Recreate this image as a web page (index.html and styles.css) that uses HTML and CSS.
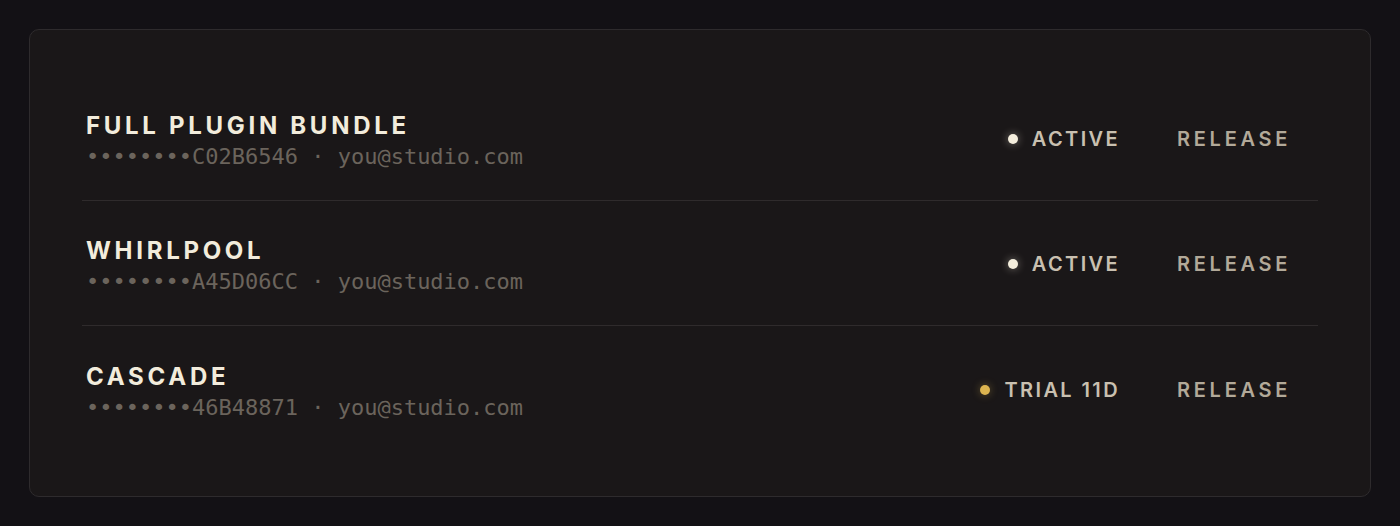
FILE: index.html
```html
<!DOCTYPE html>
<html>
<head>
<meta charset="utf-8">
<link rel="stylesheet" href="styles.css">
</head>
<body>
<div class="card">
  <div class="row">
    <div class="info">
      <div class="name">FULL PLUGIN BUNDLE</div>
      <div class="key">••••••••C02B6546 · you@studio.com</div>
    </div>
    <div class="actions">
      <span class="status"><span class="dot dot-active"></span>ACTIVE</span>
      <button class="release">RELEASE</button>
    </div>
  </div>
  <div class="row">
    <div class="info">
      <div class="name">WHIRLPOOL</div>
      <div class="key">••••••••A45D06CC · you@studio.com</div>
    </div>
    <div class="actions">
      <span class="status"><span class="dot dot-active"></span>ACTIVE</span>
      <button class="release">RELEASE</button>
    </div>
  </div>
  <div class="row">
    <div class="info">
      <div class="name">CASCADE</div>
      <div class="key">••••••••46B48871 · you@studio.com</div>
    </div>
    <div class="actions">
      <span class="status"><span class="dot dot-trial"></span>TRIAL 11D</span>
      <button class="release">RELEASE</button>
    </div>
  </div>
</div>
</body>
</html>
```
FILE: styles.css
```css
html, body {
  margin: 0;
  padding: 0;
  background: #131115;
}
body {
  padding: 29px;
  font-family: Inter, "Noto Sans", sans-serif;
}
.card {
  background: #1a1718;
  border: 1px solid #2e2b2d;
  border-radius: 10px;
  padding: 46px 52px 45px;
  box-sizing: border-box;
  height: 468px;
}
.row {
  display: flex;
  align-items: center;
  justify-content: space-between;
  height: 125px;
  box-sizing: border-box;
  padding: 5px 4px 0;
  border-bottom: 1px solid #2f2b2c;
}
.row:last-child {
  border-bottom: none;
}
.info {
  display: flex;
  flex-direction: column;
}
.name {
  font-weight: 700;
  font-size: 24px;
  line-height: 29px;
  letter-spacing: 3.7px;
  color: #f2ecdc;
}
.key {
  font-family: "DejaVu Sans Mono", monospace;
  font-size: 22px;
  line-height: 26px;
  margin-top: 4px;
  color: #6b645c;
}
.actions {
  display: flex;
  align-items: center;
  margin-bottom: 3px;
}
.status {
  display: flex;
  align-items: center;
  font-size: 20px;
  font-weight: 600;
  letter-spacing: 2.4px;
  color: #c9c0b0;
}
.dot {
  width: 10px;
  height: 10px;
  border-radius: 50%;
  margin-right: 14px;
}
.dot-active {
  background: #f4eedd;
  box-shadow: 0 0 8px rgba(244, 238, 221, 0.45);
}
.dot-trial {
  background: #dcb450;
  box-shadow: 0 0 8px rgba(220, 180, 80, 0.4);
}
.release {
  background: none;
  border: none;
  font-family: Inter, "Noto Sans", sans-serif;
  font-size: 20px;
  font-weight: 600;
  letter-spacing: 3.7px;
  color: #b2a999;
  padding: 10px 23px 10px 21px;
  margin-left: 36px;
}
```
